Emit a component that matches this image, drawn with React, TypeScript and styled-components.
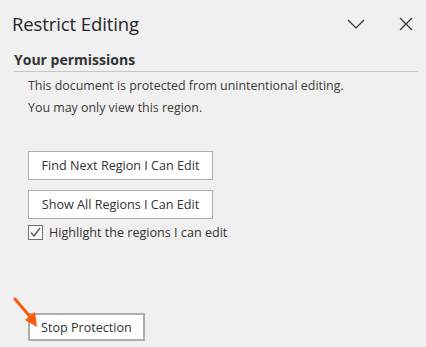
import React from "react";
import styled, { createGlobalStyle } from "styled-components";

const GlobalStyle = createGlobalStyle`
  html, body {
    margin: 0;
    padding: 0;
    background: #f0f0f0;
  }
  * {
    box-sizing: border-box;
  }
`;

//#region Styled components

const Pane = styled("div")`
  position: relative;
  width: 426px;
  height: 347px;
  background: #f0f0f0;
  font-family: "Open Sans", "Noto Sans", sans-serif;
  color: #333333;
  overflow: hidden;
`;

const Header = styled("header")`
  display: flex;
  align-items: center;
  justify-content: space-between;
  height: 47px;
  padding: 0 8px 0 12px;
`;

const Title = styled("h1")`
  margin: 0;
  font-size: 18.5px;
  font-weight: 400;
  color: #262626;
  letter-spacing: -0.1px;
`;

const HeaderActions = styled("div")`
  display: flex;
  align-items: center;
  gap: 26px;
`;

const IconButton = styled("button")`
  display: flex;
  align-items: center;
  justify-content: center;
  width: 24px;
  height: 24px;
  padding: 0;
  border: none;
  background: transparent;
  color: #333333;
`;

const Section = styled("section")`
  padding: 3px 8px 0 14px;
`;

const SectionTitle = styled("h2")`
  margin: 0;
  padding-bottom: 1px;
  font-size: 14px;
  font-weight: 700;
  color: #333333;
  border-bottom: 1px solid #c6c6c6;
  line-height: 20px;
`;

const Body = styled("div")`
  padding: 3px 0 0 14px;
`;

const Line = styled("p")`
  margin: 0;
  font-size: 12.4px;
  line-height: 22px;
  color: #3b3b3b;
`;

const ButtonStack = styled("div")`
  display: flex;
  flex-direction: column;
  align-items: flex-start;
  gap: 10px;
  margin-top: 32px;
`;

const PaneButton = styled("button")<{ $primary?: boolean }>`
  height: ${(p) => (p.$primary ? "28px" : "29px")};
  padding: 0 11px;
  width: ${(p) => (p.$primary ? "auto" : "185px")};
  background: #ffffff;
  border: ${(p) => (p.$primary ? "2px solid #adadad" : "1px solid #adadad")};
  font-family: inherit;
  font-size: 12.6px;
  color: #333333;
  text-align: center;
`;

const CheckRow = styled("label")`
  display: flex;
  align-items: center;
  gap: 6px;
  margin-top: 5px;
  font-size: 12.6px;
  color: #333333;
`;

const Box = styled("span")`
  display: flex;
  align-items: center;
  justify-content: center;
  width: 15px;
  height: 15px;
  background: #ffffff;
  border: 1px solid #707070;
`;

const Footer = styled("div")`
  position: absolute;
  left: 28px;
  top: 313px;
`;

const Arrow = styled("svg")`
  position: absolute;
  left: 10px;
  top: 294px;
`;
//#endregion

const ChevronDown = () => (
  <svg width="18" height="12" viewBox="0 0 18 12">
    <path d="M1 2 L9 10 L17 2" fill="none" stroke="#333" strokeWidth="1.2" />
  </svg>
);

const CloseIcon = () => (
  <svg width="14" height="14" viewBox="0 0 14 14">
    <path d="M1 1 L13 13 M13 1 L1 13" fill="none" stroke="#333" strokeWidth="1.2" />
  </svg>
);

const Check = () => (
  <svg width="13" height="13" viewBox="0 0 13 13">
    <path d="M2 6.5 L5 10 L11 2" fill="none" stroke="#666" strokeWidth="1.6" />
  </svg>
);

const App: React.FC = () => {
  return (
    <Pane>
      <GlobalStyle />
      <Header>
        <Title>Restrict Editing</Title>
        <HeaderActions>
          <IconButton aria-label="Options">
            <ChevronDown />
          </IconButton>
          <IconButton aria-label="Close">
            <CloseIcon />
          </IconButton>
        </HeaderActions>
      </Header>
      <Section>
        <SectionTitle>Your permissions</SectionTitle>
        <Body>
          <Line>This document is protected from unintentional editing.</Line>
          <Line>You may only view this region.</Line>
          <ButtonStack>
            <PaneButton>Find Next Region I Can Edit</PaneButton>
            <PaneButton>Show All Regions I Can Edit</PaneButton>
          </ButtonStack>
          <CheckRow>
            <Box>
              <Check />
            </Box>
            Highlight the regions I can edit
          </CheckRow>
        </Body>
      </Section>
      <Footer>
        <PaneButton $primary>Stop Protection</PaneButton>
      </Footer>
      <Arrow width="34" height="36" viewBox="0 0 34 36">
        <line x1="5" y1="5" x2="22" y2="25" stroke="#ff5a0a" strokeWidth="3" strokeLinecap="round" />
        <polygon points="27,33 15,26 25,18" fill="#ff5a0a" />
      </Arrow>
    </Pane>
  );
};

export default App;
